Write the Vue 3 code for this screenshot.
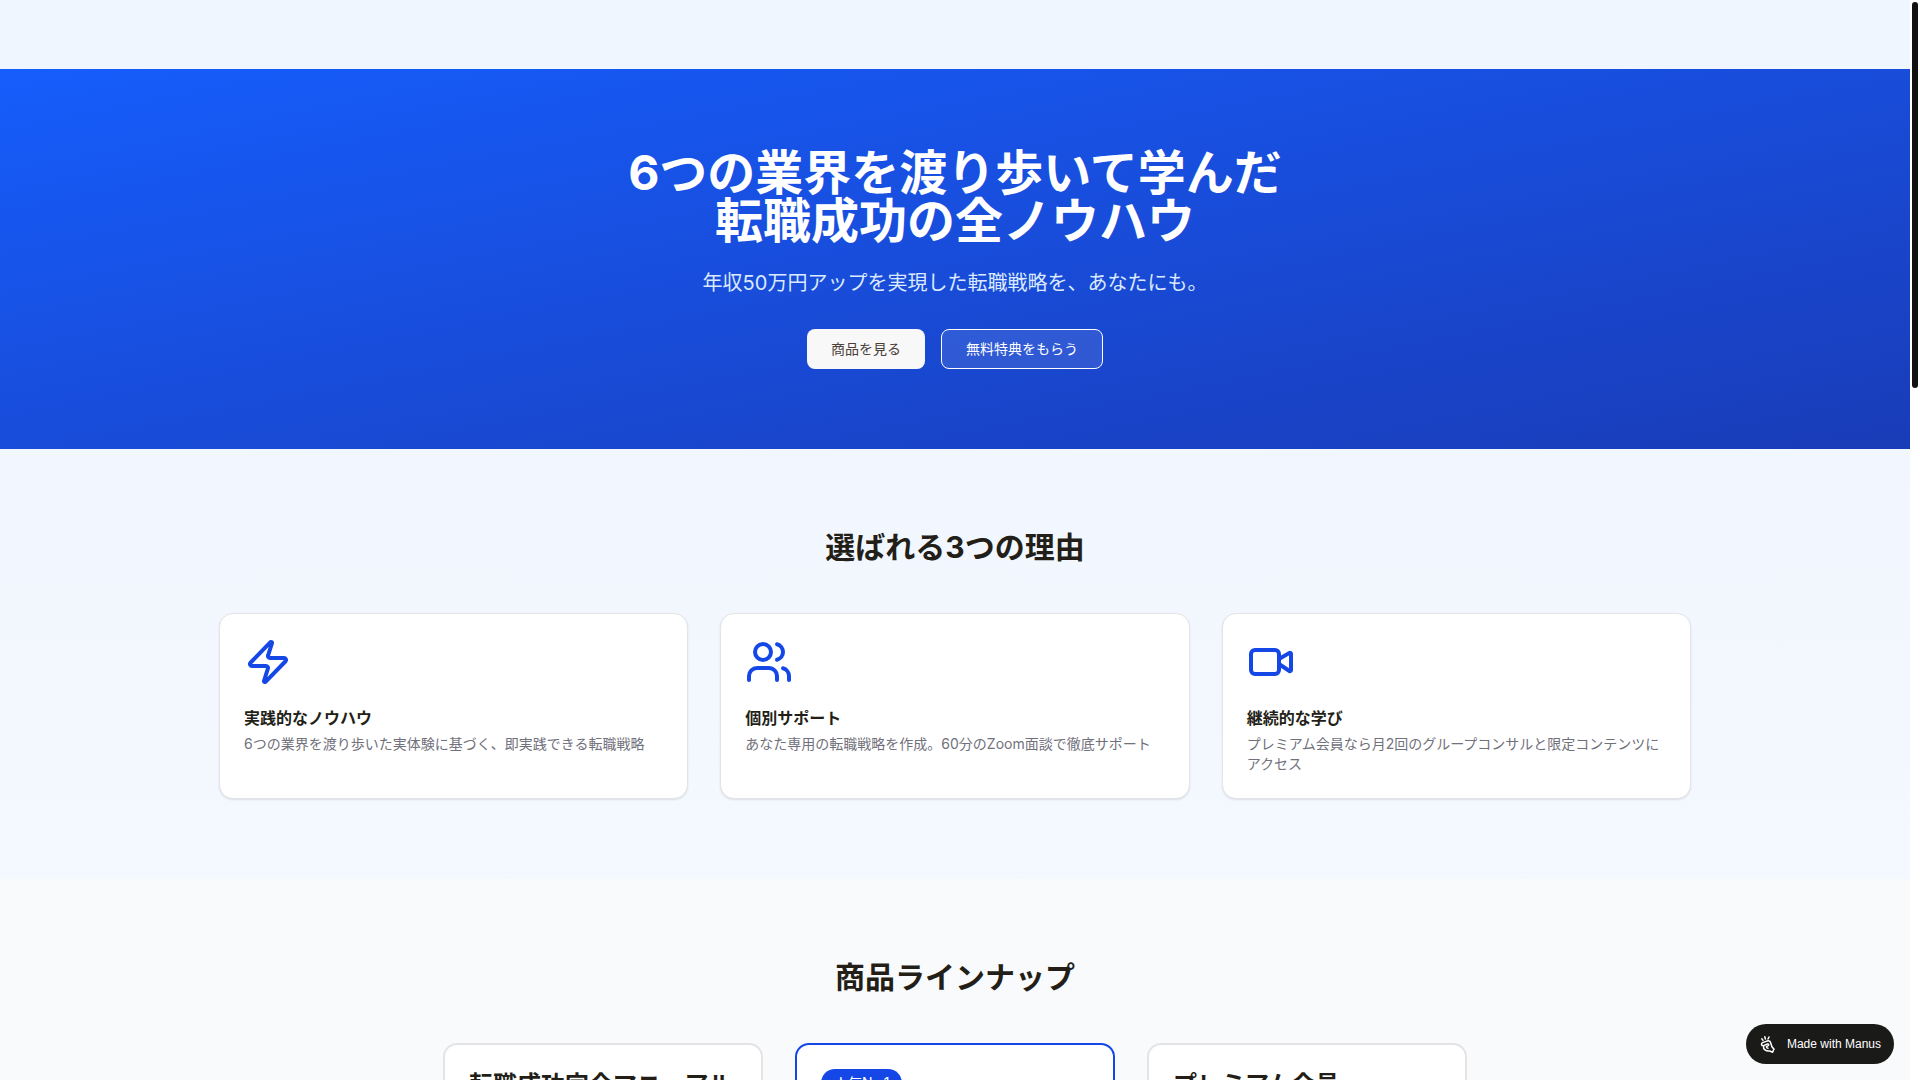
<script setup>
const reasons = [
  { icon: 'zap', title: '実践的なノウハウ', text: '6つの業界を渡り歩いた実体験に基づく、即実践できる転職戦略' },
  { icon: 'users', title: '個別サポート', text: 'あなた専用の転職戦略を作成。60分のZoom面談で徹底サポート' },
  { icon: 'video', title: '継続的な学び', text: 'プレミアム会員なら月2回のグループコンサルと限定コンテンツにアクセス' },
]
const products = [
  { title: '転職成功完全マニュアル' },
  { title: '個別サポートプラン', badge: '人気No.1' },
  { title: 'プレミアム会員' },
]
</script>

<template>
  <div class="window" lang="ja">
    <div class="page">
      <header class="topbar"></header>
      <main>
        <section class="hero">
          <h1>6つの業界を渡り歩いて学んだ<br />転職成功の全ノウハウ</h1>
          <p>年収50万円アップを実現した転職戦略を、あなたにも。</p>
          <div class="actions">
            <button type="button" class="btn light">商品を見る</button>
            <button type="button" class="btn outline">無料特典をもらう</button>
          </div>
        </section>

        <section class="block">
          <h2>選ばれる3つの理由</h2>
          <div class="reasons">
            <article v-for="r in reasons" :key="r.title" class="card">
              <svg viewBox="0 0 24 24" aria-hidden="true">
                <path
                  v-if="r.icon === 'zap'"
                  d="M4 14a1 1 0 0 1-.78-1.63l9.9-10.2a.5.5 0 0 1 .86.46l-1.92 6.02A1 1 0 0 0 13 10h7a1 1 0 0 1 .78 1.63l-9.9 10.2a.5.5 0 0 1-.86-.46l1.92-6.02A1 1 0 0 0 11 14z"
                />
                <template v-else-if="r.icon === 'users'">
                  <path d="M16 21v-2a4 4 0 0 0-4-4H6a4 4 0 0 0-4 4v2" />
                  <path d="M16 3.128a4 4 0 0 1 0 7.744" />
                  <path d="M22 21v-2a4 4 0 0 0-3-3.87" />
                  <circle cx="9" cy="7" r="4" />
                </template>
                <template v-else>
                  <path d="m16 13 5.223 3.482a.5.5 0 0 0 .777-.416V7.87a.5.5 0 0 0-.752-.432L16 10.5" />
                  <rect x="2" y="6" width="14" height="12" rx="2" />
                </template>
              </svg>
              <h3>{{ r.title }}</h3>
              <p>{{ r.text }}</p>
            </article>
          </div>
        </section>

        <section class="block lineup">
          <h2>商品ラインナップ</h2>
          <div class="products">
            <article v-for="p in products" :key="p.title" class="product" :class="{ popular: p.badge }">
              <span v-if="p.badge" class="badge">{{ p.badge }}</span>
              <h3>{{ p.title }}</h3>
            </article>
          </div>
        </section>
      </main>
    </div>
    <div class="track" aria-hidden="true"><div class="thumb"></div></div>
    <a class="manus" href="#">
      <svg viewBox="0 0 16 20" aria-hidden="true">
        <path d="M1.8 4.8 3 6.4M4.8 2.8 5.4 5M9 3 8 5" />
        <path
          d="M3.6 11.8C1.2 12 .8 9.2 2.6 8.6L8 6.8C9.6 6.4 10.4 7.6 10.8 9C11.4 11 11.4 12.4 12.6 13.6L14 15L12.6 18.2L9.8 17C6 17.4 2.8 15.6 3.6 11.8Z"
        />
        <path d="M3.6 11.6 7.4 10C8.8 9.6 9.2 11.2 8 11.8L6.4 12.6C6.4 13.6 7 14.2 8 14.2" />
      </svg>
      <span>Made with Manus</span>
    </a>
  </div>
</template>

<style>
body {
  margin: 0;
  overflow: hidden;
}
</style>

<style scoped>
.window {
  display: flex;
  height: 100vh;
  overflow: hidden;
  background: #fff;
  color: #231f18;
  font-family: Inter, 'Noto Sans CJK JP', sans-serif;
  font-size: 16px;
}
.page {
  flex: 1;
  min-width: 0;
  background: linear-gradient(to bottom, #eff6ff, #f4f8ff 900px);
}
.topbar {
  height: 69px;
}
h1,
h2,
h3,
p {
  margin: 0;
}
.hero {
  padding: 80px 32px;
  text-align: center;
  color: #fff;
  background: linear-gradient(to bottom right in oklab, #155dfc, #193cb8);
}
h1 {
  margin-bottom: 24px;
  font-size: 48px;
  line-height: 48px;
  font-weight: 700;
}
.hero p {
  margin-bottom: 32px;
  font-size: 20px;
  line-height: 28px;
  color: #dbeafe;
}
.actions {
  display: flex;
  justify-content: center;
  gap: 16px;
}
.btn {
  height: 40px;
  padding: 0 24px;
  border: 0;
  border-radius: 8px;
  font-family: inherit;
  font-size: 14px;
  line-height: 20px;
  font-weight: 400;
}
.light {
  background: #f8f8f8;
  color: #4a4038;
}
.outline {
  border: 1px solid #fff;
  background: rgba(255, 255, 255, 0.1);
  color: #fff;
}
.block {
  padding: 80px 32px;
}
h2 {
  margin-bottom: 48px;
  text-align: center;
  font-size: 30px;
  line-height: 36px;
  font-weight: 700;
}
.reasons {
  display: grid;
  grid-template-columns: repeat(3, 1fr);
  gap: 32px;
  max-width: 1472px;
  margin: 0 auto;
}
.card {
  padding: 24px;
  border: 1px solid #e4e4e7;
  border-radius: 14px;
  background: #fff;
  box-shadow: 0 1px 2px rgba(0, 0, 0, 0.1);
}
.card svg {
  display: block;
  width: 48px;
  height: 48px;
  margin-bottom: 24px;
  fill: none;
  stroke: #1447e6;
  stroke-width: 2;
  stroke-linecap: round;
  stroke-linejoin: round;
}
.card h3 {
  margin-bottom: 8px;
  font-size: 16px;
  line-height: 16px;
  font-weight: 600;
}
.card p {
  font-size: 14px;
  line-height: 20px;
  color: #71717b;
}
.lineup {
  background: #f9fafc;
}
.products {
  display: grid;
  grid-template-columns: repeat(3, 1fr);
  gap: 32px;
  max-width: 1024px;
  margin: 0 auto;
}
.product {
  min-height: 320px;
  padding: 24px;
  border: 2px solid #e4e4e7;
  border-radius: 14px;
  background: #fff;
}
.product.popular {
  border-color: #1447e6;
}
.product h3 {
  font-size: 24px;
  line-height: 32px;
  font-weight: 700;
}
.badge {
  display: inline-block;
  margin-bottom: 16px;
  padding: 4px 13px;
  border-radius: 14px;
  background: #1447e6;
  color: #fff;
  font-size: 14px;
  line-height: 20px;
}
.track {
  flex: none;
  padding: 2px;
}
.thumb {
  width: 6px;
  height: 386px;
  border-radius: 3px;
  background: #111;
}
.manus {
  position: fixed;
  right: 26px;
  bottom: 16px;
  display: flex;
  align-items: center;
  gap: 11px;
  height: 40px;
  padding: 0 13px 0 14px;
  border-radius: 20px;
  background: #1a1a18;
  color: #fff;
  font: 12px/16px 'Liberation Sans', sans-serif;
  text-decoration: none;
}
.manus svg {
  width: 16px;
  height: 20px;
  fill: none;
  stroke: #fff;
  stroke-width: 1.5;
  stroke-linecap: round;
  stroke-linejoin: round;
}
</style>
